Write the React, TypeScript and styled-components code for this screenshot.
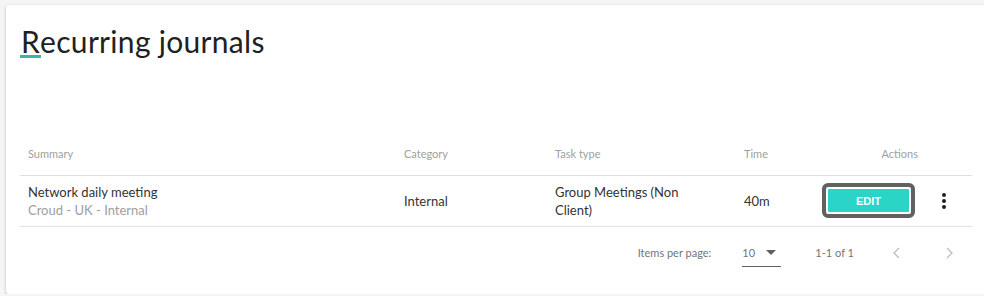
import React from 'react'
import styled, { createGlobalStyle } from 'styled-components'

const GlobalStyle = createGlobalStyle`
  html, body {
    margin: 0;
    padding: 0;
    background: #f5f5f5;
    overflow: hidden;
  }
  body {
    font-family: Lato, 'Open Sans', Arial, sans-serif;
    color: #212121;
  }
`

const Page = styled.div`
  padding: 5px 0 0 6px;
`

const Card = styled.div`
  width: 980px;
  height: 289px;
  box-sizing: border-box;
  background: #fff;
  border-radius: 2px;
  box-shadow: 0 1px 3px rgba(0, 0, 0, 0.25), 0 1px 1px rgba(0, 0, 0, 0.14);
  padding: 18px 14px 0 14px;
  display: flex;
  flex-direction: column;
`

const Title = styled.h1`
  margin: 0 0 0 1px;
  font-size: 30px;
  font-weight: 400;
  line-height: 36px;
  color: #212121;
  letter-spacing: 0.3px;

  span {
    position: relative;
  }
  span::after {
    content: '';
    position: absolute;
    left: -1px;
    right: -1px;
    bottom: 1px;
    height: 3px;
    background: #3cb5a5;
  }
`

const Table = styled.table`
  margin-top: 60px;
  width: 100%;
  border-collapse: collapse;
  table-layout: fixed;
`

const HeadCell = styled.th<{ $align?: string; $width?: number }>`
  height: 56px;
  padding: 0 0 15px 8px;
  box-sizing: border-box;
  text-align: ${({ $align }) => $align || 'left'};
  width: ${({ $width }) => ($width ? `${$width}px` : 'auto')};
  font-size: 11px;
  font-weight: 400;
  color: #a0a0a0;
  border-bottom: 1px solid #e0e0e0;
  vertical-align: bottom;
`

const Cell = styled.td<{ $align?: string }>`
  height: 50px;
  padding: 0 0 0 8px;
  text-align: ${({ $align }) => $align || 'left'};
  font-size: 13px;
  color: #333;
  border-bottom: 1px solid #e0e0e0;
  vertical-align: middle;
  line-height: 18px;
`

const Sub = styled.div`
  color: #9e9e9e;
  font-size: 13px;
`

const ActionsWrap = styled.div`
  display: flex;
  align-items: center;
  justify-content: flex-end;
  gap: 17px;
  padding-right: 16px;
`

const EditButton = styled.button`
  box-sizing: border-box;
  flex-shrink: 0;
  width: 93px;
  height: 35px;
  border: 4px solid #616161;
  border-radius: 6px;
  padding: 2px;
  background: #fff;
  cursor: pointer;

  span {
    display: flex;
    align-items: center;
    justify-content: center;
    height: 100%;
    background: #2ad4c6;
    color: #fff;
    font-family: Arial, 'Liberation Sans', sans-serif;
    font-size: 11px;
    font-weight: 700;
    border-radius: 1px;
  }
`

const MoreIcon = styled.svg`
  width: 24px;
  height: 24px;
  flex-shrink: 0;
  display: block;
`

const Paginator = styled.div`
  display: flex;
  align-items: center;
  justify-content: flex-end;
  height: 52px;
  font-size: 11px;
  color: #757575;
  padding-right: 3px;
`

const Label = styled.span`
  margin-right: 31px;
`

const Select = styled.div`
  display: flex;
  align-items: center;
  justify-content: space-between;
  align-self: flex-start;
  width: 39px;
  height: 24px;
  margin-top: 16px;
  margin-right: 34px;
  padding-bottom: 3px;
  border-bottom: 1px solid #616161;
  box-sizing: border-box;
  color: #757575;

  svg {
    margin-right: 5px;
  }
`

const Range = styled.span`
  margin-right: 11px;
`

const NavButton = styled.button`
  width: 40px;
  height: 40px;
  border: none;
  background: transparent;
  display: flex;
  align-items: center;
  justify-content: center;
  padding: 0;
  margin-left: 12px;
`

function Chevron({ dir }: { dir: 'left' | 'right' }) {
  return (
    <svg width="24" height="24" viewBox="0 0 24 24">
      <path
        d={dir === 'left' ? 'M14 7l-5 5 5 5' : 'M10 7l5 5-5 5'}
        fill="none"
        stroke="#bdbdbd"
        strokeWidth="1.3"
      />
    </svg>
  )
}

export default function App() {
  return (
    <Page>
      <GlobalStyle />
      <Card>
        <Title>
          <span>R</span>ecurring journals
        </Title>
        <Table>
          <thead>
            <tr>
              <HeadCell $width={376}>Summary</HeadCell>
              <HeadCell $width={151}>Category</HeadCell>
              <HeadCell $width={189}>Task type</HeadCell>
              <HeadCell $width={70}>Time</HeadCell>
              <HeadCell $align="right" style={{ paddingRight: 54 }}>
                Actions
              </HeadCell>
            </tr>
          </thead>
          <tbody>
            <tr>
              <Cell>
                <div>Network daily meeting</div>
                <Sub>Croud - UK - Internal</Sub>
              </Cell>
              <Cell>Internal</Cell>
              <Cell>
                Group Meetings (Non
                <br />
                Client)
              </Cell>
              <Cell>40m</Cell>
              <Cell>
                <ActionsWrap>
                  <EditButton>
                    <span>EDIT</span>
                  </EditButton>
                  <MoreIcon viewBox="0 0 24 24">
                    <circle cx="12" cy="6" r="2" fill="#212121" />
                    <circle cx="12" cy="12" r="2" fill="#212121" />
                    <circle cx="12" cy="18" r="2" fill="#212121" />
                  </MoreIcon>
                </ActionsWrap>
              </Cell>
            </tr>
          </tbody>
        </Table>
        <Paginator>
          <Label>Items per page:</Label>
          <Select>
            <span>10</span>
            <svg width="10" height="5" viewBox="0 0 10 5">
              <path d="M0 0h10L5 5z" fill="#616161" />
            </svg>
          </Select>
          <Range>1-1 of 1</Range>
          <NavButton aria-label="Previous page">
            <Chevron dir="left" />
          </NavButton>
          <NavButton aria-label="Next page">
            <Chevron dir="right" />
          </NavButton>
        </Paginator>
      </Card>
    </Page>
  )
}
